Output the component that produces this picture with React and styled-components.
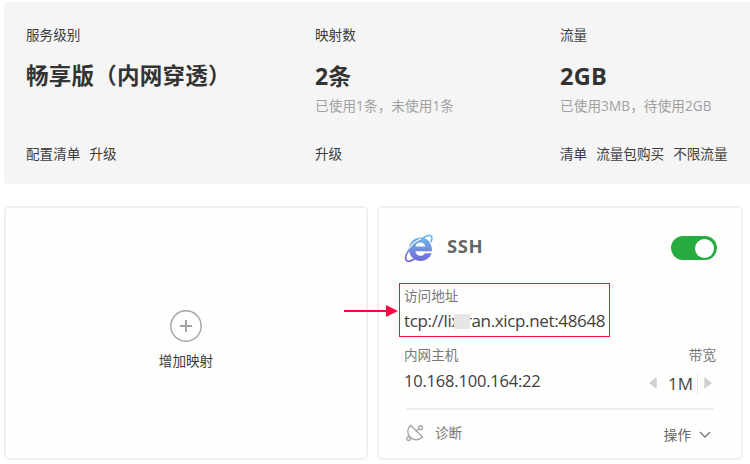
import React from "react";
import styled, { createGlobalStyle } from "styled-components";

const Global = createGlobalStyle`
  * { box-sizing: border-box; }
  body {
    margin: 0;
    background: #fff;
    font-family: "Open Sans", "Noto Sans CJK SC", sans-serif;
    font-size: 13.6px;
    line-height: 20px;
    color: #3c3c3c;
    overflow: hidden;
  }
`;

const Page = styled.main`
  width: 750px;
  height: 464px;
  padding: 2px 0 0 4px;
`;

const Summary = styled.section`
  display: grid;
  grid-template-columns: 289px 245px 1fr;
  height: 182px;
  padding: 23px 0 0 22px;
  background: #f5f5f5;
  border-radius: 4px 0 0 4px;
  white-space: nowrap;
`;

const Stat = styled.div`
  display: flex;
  flex-direction: column;
`;

const StatValue = styled.div`
  margin-top: 16px;
  height: 30px;
  line-height: 30px;
  font-size: ${(p) => p.$size || 22.5}px;
  font-weight: 700;
  color: #333;
  letter-spacing: ${(p) => p.$track || 0}px;
`;

const StatNote = styled.div`
  margin-top: 5px;
  height: 20px;
  color: #a0a0a0;
  letter-spacing: 0.1px;
`;

const Links = styled.div`
  display: flex;
  gap: 9px;
  margin-top: 28px;
`;

const Cards = styled.section`
  display: grid;
  grid-template-columns: 364px 366px;
  gap: 9px;
  margin-top: 22px;
`;

const Card = styled.article`
  height: 254px;
  border: 1px solid #ededed;
  box-shadow: inset 0 0 0 1px #f4f4f3;
  border-radius: 5px;
  background: #fefefd;
`;

const AddCard = styled(Card)`
  display: flex;
  flex-direction: column;
  align-items: center;
  padding-top: 103px;
  gap: 9px;
`;

const MappingCard = styled(Card)`
  padding: 27px 26px 0 26px;
`;

const Head = styled.header`
  display: flex;
  align-items: flex-start;
  height: 49px;
`;

const Title = styled.h2`
  margin: 0 auto 0 13px;
  font-size: 18.5px;
  line-height: 24px;
  font-weight: 700;
  color: #666;
  letter-spacing: 0.6px;
`;

const Toggle = styled.div`
  display: flex;
  justify-content: flex-end;
  align-items: center;
  width: 46px;
  height: 24px;
  margin-top: 2px;
  margin-right: -1px;
  padding-right: 3px;
  border-radius: 12px;
  background: #25ab3f;
`;

const Knob = styled.span`
  width: 19px;
  height: 19px;
  border-radius: 50%;
  background: #fff;
`;

const AddressBox = styled.div`
  position: relative;
  width: 211px;
  height: 54px;
  margin-left: -5px;
  padding: 2px 0 0 4px;
  border: 1px solid #ee1547;
`;

const Arrow = styled.svg`
  position: absolute;
  left: -56px;
  top: 20px;
`;

const Label = styled.div`
  height: 20px;
  color: #777;
`;

const Value = styled.div`
  display: flex;
  height: 24px;
  margin-top: ${(p) => p.$top || 0}px;
  line-height: 24px;
  font-size: ${(p) => p.$size}px;
  letter-spacing: ${(p) => p.$track || 0}px;
  color: #404040;
  white-space: nowrap;
`;

const Mask = styled.span`
  position: relative;
  flex: none;
  width: 16px;
  height: 15px;
  margin: 5px -5px 0 -6px;
  background: #e6e6e6;
`;

const HostRow = styled.div`
  display: flex;
  justify-content: space-between;
  height: 63px;
  margin-top: 8px;
`;

const Bandwidth = styled.div`
  display: flex;
  flex-direction: column;
  align-items: flex-end;
`;

const Stepper = styled.div`
  display: flex;
  align-items: center;
  height: 24px;
  margin: 6px 4px 0 0;
  font-size: 17px;
  color: #444;
`;

const Amount = styled.span`
  width: 30px;
  height: 20px;
  margin: 2px 6px 0 11px;
  border-right: 1px solid #dbe9fa;
`;

const Foot = styled.footer`
  display: flex;
  align-items: flex-start;
  margin: 0 2px;
  padding-top: 13px;
  border-top: 2px solid #eee;
  color: #777;
`;

const Diagnose = styled.div`
  display: flex;
  gap: 11px;
  margin-right: auto;
`;

const Actions = styled.div`
  display: flex;
  align-items: center;
  gap: 8px;
  margin: 2px 3px 0 0;
  color: #666;
`;

const BrowserIcon = () => (
  <svg width="30" height="30" viewBox="0 0 30 30">
    <defs>
      <linearGradient id="browser" gradientUnits="userSpaceOnUse" x1="0" y1="1" x2="0" y2="28">
        <stop offset="0" stopColor="#6cc0ea" />
        <stop offset="1" stopColor="#7363d8" />
      </linearGradient>
    </defs>
    <path
      fill="url(#browser)"
      fillRule="evenodd"
      d="M27.9 17.3H11.4C11.8 20.3 13.8 21.8 16.6 21.8C18.6 21.8 20 21 20.9 19.3H27.5C26 24 21.7 26.9 16.6 26.9C10 26.9 5 22 5 15.2C5 8.5 10 3.4 16.6 3.4C23.5 3.4 28.4 8.7 27.9 17.3ZM11.5 12.6H21.3C20.9 9.8 19.1 8.5 16.5 8.5C13.8 8.5 12 9.9 11.5 12.6Z"
    />
    <path
      fill="none"
      stroke="#fefefd"
      strokeWidth="1.2"
      d="M4.2 16.2C7.2 10.8 11.6 6.7 17 4.7"
    />
    <path
      fill="none"
      stroke="url(#browser)"
      strokeWidth="1.7"
      d="M18.8 4C23 1.4 26.4.9 27.4 2.4C28.1 3.5 27.9 5.7 27 8M5.8 14.8C2.4 19.4.8 24.2 2.3 26.3C3.6 28 7.1 27.2 11 24.8"
    />
  </svg>
);

const PlusIcon = () => (
  <svg width="32" height="32" viewBox="0 0 32 32" fill="none" stroke="#a3a3a3">
    <circle cx="16" cy="16" r="15.2" strokeWidth="1.4" />
    <path d="M16 10v12M10 16h12" strokeWidth="2" />
  </svg>
);

const DishIcon = () => (
  <svg width="18" height="20" viewBox="0 -1 18 20" fill="none" stroke="#a6a6a6" strokeWidth="1.4">
    <path d="M4.6 1.2C.9 5 .9 10.2 4.2 13.3C7.5 16.4 12.7 16.7 16.5 12.9Z" strokeLinejoin="round" />
    <path d="M10.1 7.2L13 4.8M2.5 11.8L2.2 13.2M4.2 14.3L5.8 14.2" />
    <circle cx="14.5" cy="3.7" r="1.9" />
    <circle cx="2.6" cy="14.7" r="1.8" />
  </svg>
);

const StepIcon = ({ next }) => (
  <svg width="8" height="12" viewBox="0 0 8 12" fill="#d0d0d0" stroke="#d0d0d0" strokeLinejoin="round">
    <path d={next ? "M.8 .8V11.2L7.3 6Z" : "M7.2 .8V11.2L.7 6Z"} />
  </svg>
);

export default function App() {
  return (
    <Page>
      <Global />
      <Summary>
        <Stat>
          <div>服务级别</div>
          <StatValue $track={0.25}>畅享版（内网穿透）</StatValue>
          <StatNote />
          <Links><span>配置清单</span><span>升级</span></Links>
        </Stat>
        <Stat>
          <div>映射数</div>
          <StatValue $size={23}>2条</StatValue>
          <StatNote>已使用1条，未使用1条</StatNote>
          <Links><span>升级</span></Links>
        </Stat>
        <Stat>
          <div>流量</div>
          <StatValue $size={23.5} $track={0.3}>2GB</StatValue>
          <StatNote>已使用3MB，待使用2GB</StatNote>
          <Links><span>清单</span><span>流量包购买</span><span>不限流量</span></Links>
        </Stat>
      </Summary>
      <Cards>
        <AddCard>
          <PlusIcon />
          <span>增加映射</span>
        </AddCard>
        <MappingCard>
          <Head>
            <BrowserIcon />
            <Title>SSH</Title>
            <Toggle><Knob /></Toggle>
          </Head>
          <AddressBox>
            <Arrow width="54" height="14" viewBox="0 0 54 14" fill="#fa0545">
              <path d="M0 6H42V1L54 7L42 13V8H0Z" />
            </Arrow>
            <Label>访问地址</Label>
            <Value $size={17} $top={3} $track={-0.35}>
              <span>tcp://lix</span><Mask /><span>ran.xicp.net:48648</span>
            </Value>
          </AddressBox>
          <HostRow>
            <div>
              <Label>内网主机</Label>
              <Value $size={16.5} $top={4} $track={-0.2}>10.168.100.164:22</Value>
            </div>
            <Bandwidth>
              <Label>带宽</Label>
              <Stepper>
                <StepIcon />
                <Amount>1M</Amount>
                <StepIcon next />
              </Stepper>
            </Bandwidth>
          </HostRow>
          <Foot>
            <Diagnose><DishIcon /><span>诊断</span></Diagnose>
            <Actions>
              <span>操作</span>
              <svg width="12" height="8" viewBox="0 0 12 8" fill="none" stroke="#777" strokeWidth="1.4"><path d="M1 1L6 6L11 1" /></svg>
            </Actions>
          </Foot>
        </MappingCard>
      </Cards>
    </Page>
  );
}
